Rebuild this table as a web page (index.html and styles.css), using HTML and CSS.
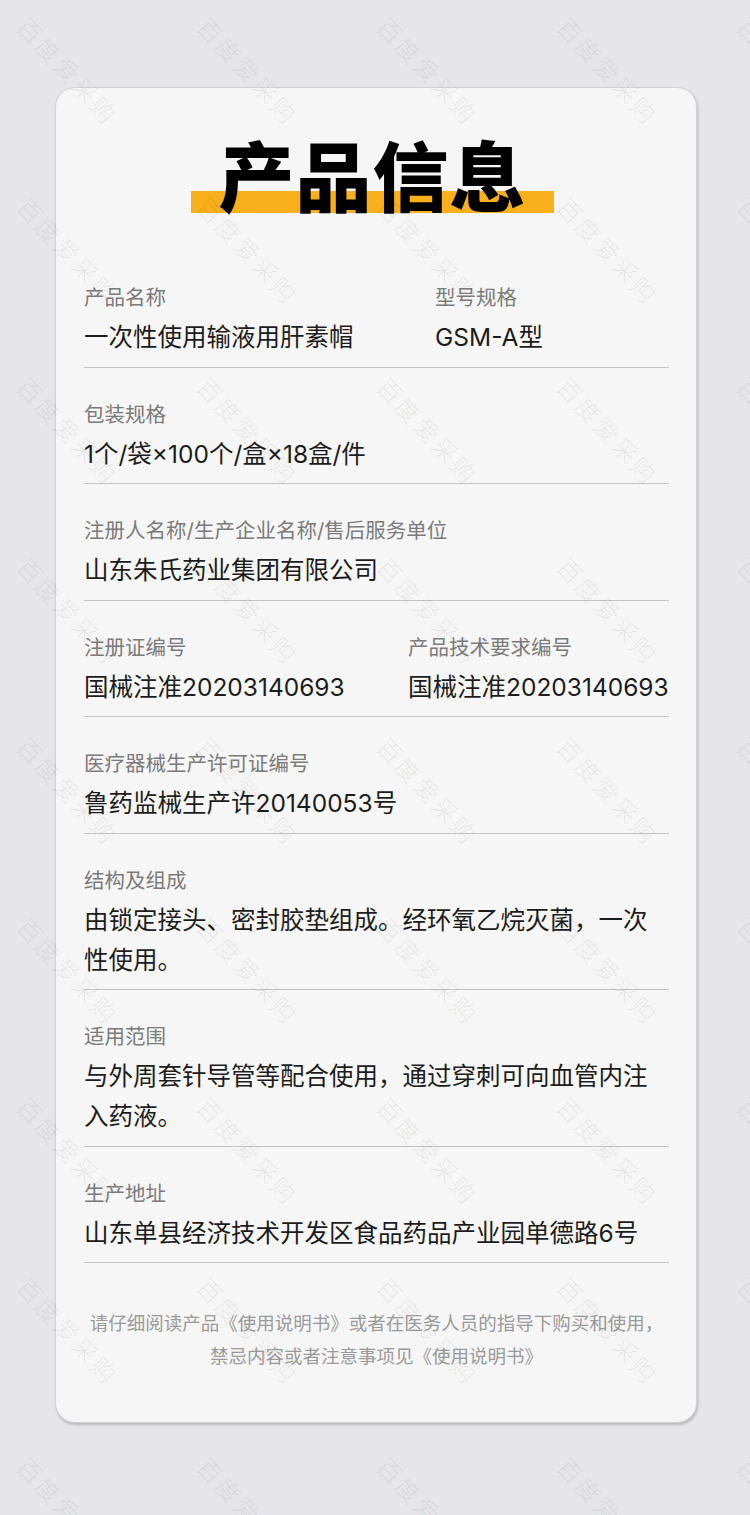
FILE: index.html
```html
<!DOCTYPE html>
<html lang="zh-CN">
<head>
  <meta charset="UTF-8" />
  <meta name="viewport" content="width=device-width, initial-scale=1.0" />
  <title>产品信息</title>
  <link rel="stylesheet" href="styles.css">
</head>
<body>
<div class="page">
  <main class="card">
    <h1 class="title"><span>产品信息</span></h1>

    <section class="info">
      <div class="row cols-a">
        <div class="field">
          <div class="label">产品名称</div>
          <div class="value">一次性使用输液用肝素帽</div>
        </div>
        <div class="field">
          <div class="label">型号规格</div>
          <div class="value">GSM-A型</div>
        </div>
      </div>

      <div class="row">
        <div class="field">
          <div class="label">包装规格</div>
          <div class="value">1个/袋×100个/盒×18盒/件</div>
        </div>
      </div>

      <div class="row">
        <div class="field">
          <div class="label">注册人名称/生产企业名称/售后服务单位</div>
          <div class="value">山东朱氏药业集团有限公司</div>
        </div>
      </div>

      <div class="row cols-b">
        <div class="field">
          <div class="label">注册证编号</div>
          <div class="value">国械注准20203140693</div>
        </div>
        <div class="field">
          <div class="label">产品技术要求编号</div>
          <div class="value">国械注准20203140693</div>
        </div>
      </div>

      <div class="row">
        <div class="field">
          <div class="label">医疗器械生产许可证编号</div>
          <div class="value">鲁药监械生产许20140053号</div>
        </div>
      </div>

      <div class="row">
        <div class="field">
          <div class="label">结构及组成</div>
          <div class="value">由锁定接头、密封胶垫组成。经环氧乙烷灭菌，一次性使用。</div>
        </div>
      </div>

      <div class="row">
        <div class="field">
          <div class="label">适用范围</div>
          <div class="value">与外周套针导管等配合使用，通过穿刺可向血管内注入药液。</div>
        </div>
      </div>

      <div class="row">
        <div class="field">
          <div class="label">生产地址</div>
          <div class="value">山东单县经济技术开发区食品药品产业园单德路6号</div>
        </div>
      </div>
    </section>

    <p class="notice">请仔细阅读产品《使用说明书》或者在医务人员的指导下购买和使用，<br>禁忌内容或者注意事项见《使用说明书》</p>
  </main>

  <!-- watermark layer over the whole page -->
  <div class="watermark">
    <span>百度爱采购</span><span>百度爱采购</span><span>百度爱采购</span><span>百度爱采购</span><span>百度爱采购</span>
    <span>百度爱采购</span><span>百度爱采购</span><span>百度爱采购</span><span>百度爱采购</span><span>百度爱采购</span>
    <span>百度爱采购</span><span>百度爱采购</span><span>百度爱采购</span><span>百度爱采购</span><span>百度爱采购</span>
    <span>百度爱采购</span><span>百度爱采购</span><span>百度爱采购</span><span>百度爱采购</span><span>百度爱采购</span>
    <span>百度爱采购</span><span>百度爱采购</span><span>百度爱采购</span><span>百度爱采购</span><span>百度爱采购</span>
    <span>百度爱采购</span><span>百度爱采购</span><span>百度爱采购</span><span>百度爱采购</span><span>百度爱采购</span>
    <span>百度爱采购</span><span>百度爱采购</span><span>百度爱采购</span><span>百度爱采购</span><span>百度爱采购</span>
    <span>百度爱采购</span><span>百度爱采购</span><span>百度爱采购</span><span>百度爱采购</span><span>百度爱采购</span>
    <span>百度爱采购</span><span>百度爱采购</span><span>百度爱采购</span><span>百度爱采购</span><span>百度爱采购</span>
  </div>
</div>
</body>
</html>
```

FILE: styles.css
```css
html, body {
  margin: 0;
}
body {
  background-color: #e6e6ea;
  font-family: Inter, "Noto Sans CJK SC", sans-serif;
  color: #1e1e1e;
}
.page {
  position: relative;
  width: 750px;
  height: 1515px;
  overflow: hidden;
}
.card {
  box-sizing: border-box;
  width: 642px;
  margin: 0 0 0 55px;
  position: relative;
  top: 87px;
  padding: 47px 27px 50px 28px;
  background-color: #f6f6f6;
  border: 1px solid #d3d3d6;
  border-radius: 20px;
  box-shadow: 1px 2px 3px rgba(0, 0, 0, 0.2);
}
.title {
  margin: 0 0 38px;
  text-align: center;
  font-family: "Noto Sans CJK SC", sans-serif;
  font-size: 76px;
  line-height: 76px;
  font-weight: 900;
  color: #000;
}
.title span {
  display: inline-block;
  margin-right: 9px;
  padding: 0 27px 2px 28px;
  letter-spacing: 1px;
  background: linear-gradient(#f7b01b, #f7b01b) no-repeat 0 56px / 100% 22px;
}
.row {
  display: grid;
  grid-template-columns: 1fr;
  padding: 35px 0 9.5px;
  border-bottom: 1px solid #c4c4c4;
}
.cols-a {
  grid-template-columns: 351px 1fr;
}
.cols-b {
  grid-template-columns: 324px 1fr;
}
.cols-a .value,
.cols-b .value {
  white-space: nowrap;
}
.label {
  font-size: 20.5px;
  line-height: 24px;
  color: #7b7b7b;
  margin-bottom: 7px;
}
.value {
  font-size: 24.5px;
  line-height: 40px;
  color: #1c1c1c;
}
.notice {
  margin: 43px 0 0;
  text-align: center;
  font-family: "Noto Sans CJK SC", sans-serif;
  font-size: 18.5px;
  line-height: 33px;
  color: #9a9a9a;
}
.watermark {
  position: absolute;
  top: -21px;
  left: -22px;
  display: grid;
  grid-template-columns: repeat(5, 180px);
  grid-auto-rows: 180px;
  pointer-events: none;
}
.watermark span {
  display: flex;
  align-items: center;
  justify-content: center;
  padding-left: 3px;
  transform: rotate(47deg);
  font-family: "Noto Sans CJK SC", sans-serif;
  font-weight: 300;
  font-size: 24px;
  letter-spacing: 3px;
  white-space: nowrap;
  color: rgba(0, 0, 0, 0.08);
}
```
